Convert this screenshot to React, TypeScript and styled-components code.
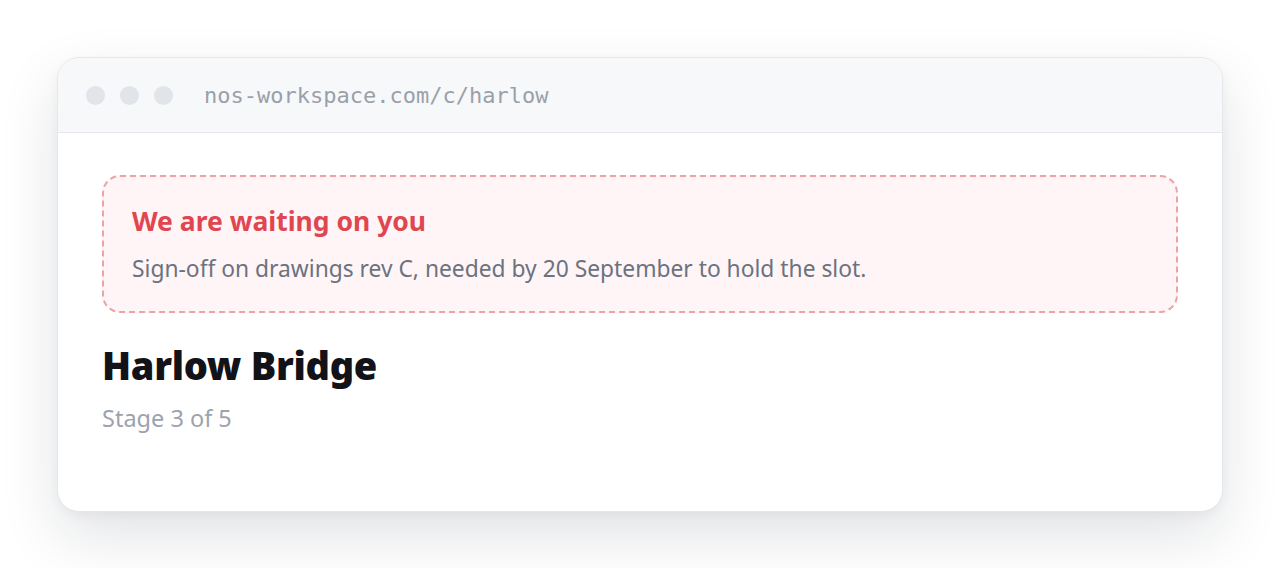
import * as React from 'react';
import styled, { createGlobalStyle } from 'styled-components';

const GlobalStyle = createGlobalStyle`
  html, body {
    margin: 0;
    padding: 0;
    background: #ffffff;
  }
  body {
    font-family: "Noto Sans", "Open Sans", sans-serif;
  }
`;

const Page = styled.div`
  padding: 57px 57px 57px 57px;
  box-sizing: border-box;
  min-height: 568px;
`;

const Window = styled.div`
  background: #ffffff;
  border: 1px solid #e5e7eb;
  border-radius: 22px;
  overflow: hidden;
  box-shadow: 0 24px 60px rgba(15, 23, 42, 0.12), 0 4px 12px rgba(15, 23, 42, 0.04);
`;

const TitleBar = styled.div`
  height: 74px;
  display: flex;
  align-items: center;
  gap: 15px;
  padding: 0 28px;
  background: #f7f8fa;
  border-bottom: 1px solid #e5e7eb;
`;

const Dot = styled.span`
  width: 19px;
  height: 19px;
  border-radius: 50%;
  background: #e1e4e8;
`;

const Address = styled.span`
  margin-left: 16px;
  font-family: "DejaVu Sans Mono", "Liberation Mono", monospace;
  font-size: 22px;
  color: #9aa0aa;
`;

const Body = styled.div`
  padding: 42px 44px 78px;
`;

const Alert = styled.div`
  border: 2px dashed #eba3aa;
  border-radius: 18px;
  background: #fff5f6;
  padding: 27px 28px 27px;
`;

const AlertTitle = styled.div`
  font-size: 26.5px;
  font-weight: 700;
  color: #e0464f;
  line-height: 34px;
`;

const AlertText = styled.div`
  margin-top: 16px;
  font-size: 22.8px;
  color: #6b7280;
  line-height: 30px;
`;

const ProjectName = styled.h1`
  margin: 28px 0 0;
  font-size: 38px;
  font-weight: 900;
  color: #111318;
  line-height: 48px;
  letter-spacing: -0.3px;
`;

const Stage = styled.div`
  margin-top: 14px;
  font-size: 23.5px;
  color: #9ca3af;
  line-height: 30px;
`;

export default function App() {
  return (
    <>
      <GlobalStyle />
      <Page>
        <Window>
          <TitleBar>
            <Dot />
            <Dot />
            <Dot />
            <Address>nos-workspace.com/c/harlow</Address>
          </TitleBar>
          <Body>
            <Alert>
              <AlertTitle>We are waiting on you</AlertTitle>
              <AlertText>Sign-off on drawings rev C, needed by 20 September to hold the slot.</AlertText>
            </Alert>
            <ProjectName>Harlow Bridge</ProjectName>
            <Stage>Stage 3 of 5</Stage>
          </Body>
        </Window>
      </Page>
    </>
  );
}
